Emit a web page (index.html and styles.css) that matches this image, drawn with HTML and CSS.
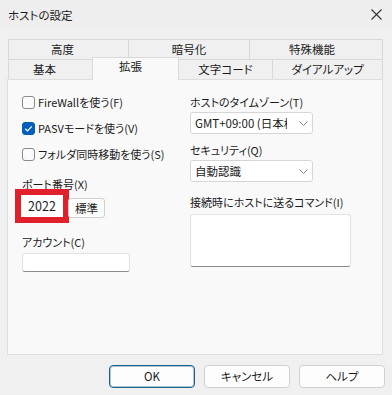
FILE: index.html
```html
<!DOCTYPE html>
<html lang="ja">
<head>
  <meta charset="UTF-8">
  <title>ホストの設定</title>
  <link rel="stylesheet" href="styles.css">
</head>
<body>
  <div class="dialog">
    <div class="titlebar">
      <span class="title">ホストの設定</span>
      <svg class="close" width="11" height="11" viewBox="0 0 11 11">
        <path d="M0.5 0.5 L10.5 10.5 M10.5 0.5 L0.5 10.5" stroke="#333" stroke-width="1.1" fill="none"/>
      </svg>
    </div>

    <div class="tabs">
      <div class="tab-row row-top">
        <div class="tab t-kodo">高度</div>
        <div class="tab t-angou">暗号化</div>
        <div class="tab t-tokushu">特殊機能</div>
      </div>
      <div class="tab-row row-bottom">
        <div class="tab t-kihon">基本</div>
        <div class="tab t-kakucho active">拡張</div>
        <div class="tab t-moji">文字コード</div>
        <div class="tab t-dial">ダイアルアップ</div>
      </div>
    </div>

    <div class="panel">
      <div class="col-left">
        <div class="check-row">
          <span class="checkbox"></span>
          <span>FireWallを使う(F)</span>
        </div>
        <div class="check-row">
          <span class="checkbox checked">
            <svg width="13" height="13" viewBox="0 0 13 13">
              <path d="M3.2 6.8 L5.5 9 L9.8 4.3" stroke="#fff" stroke-width="1.2" fill="none"/>
            </svg>
          </span>
          <span>PASVモードを使う(V)</span>
        </div>
        <div class="check-row">
          <span class="checkbox"></span>
          <span>フォルダ同時移動を使う(S)</span>
        </div>

        <div class="label port-label">ポート番号(X)</div>
        <div class="port-row">
          <div class="port-input">2022</div>
          <div class="small-btn">標準</div>
        </div>

        <div class="label account-label">アカウント(C)</div>
        <div class="text-input account-input"></div>
      </div>

      <div class="col-right">
        <div class="label tz-label">ホストのタイムゾーン(T)</div>
        <div class="select">
          <span class="select-text">GMT+09:00 (日本標準時)</span>
          <svg class="chevron" width="9" height="5" viewBox="0 0 9 5">
            <path d="M0.5 0.5 L4.5 4.5 L8.5 0.5" stroke="#888" stroke-width="1" fill="none"/>
          </svg>
        </div>

        <div class="label sec-label">セキュリティ(Q)</div>
        <div class="select">
          <span class="select-text">自動認識</span>
          <svg class="chevron" width="9" height="5" viewBox="0 0 9 5">
            <path d="M0.5 0.5 L4.5 4.5 L8.5 0.5" stroke="#888" stroke-width="1" fill="none"/>
          </svg>
        </div>

        <div class="label cmd-label">接続時にホストに送るコマンド(I)</div>
        <div class="text-input textarea"></div>
      </div>
    </div>

    <div class="buttons">
      <div class="btn btn-ok">OK</div>
      <div class="btn">キャンセル</div>
      <div class="btn">ヘルプ</div>
    </div>
  </div>
</body>
</html>
```

FILE: styles.css
```css
* {
  box-sizing: border-box;
}

body {
  margin: 0;
  background-color: #f0f0f0;
  font-family: 'Noto Sans CJK JP', sans-serif;
  font-size: 11px;
  color: #1b1b1b;
  font-feature-settings: "palt";
}

.dialog {
  width: 392px;
  height: 395px;
  overflow: hidden;
}

/* title bar */
.titlebar {
  height: 29px;
  display: flex;
  align-items: center;
  justify-content: space-between;
  padding: 0 10px 0 8px;
  background-color: #eeeeee;
}

.title {
  font-size: 11.5px;
}

/* tabs */
.tabs {
  margin: 10px 0 0 8px;
}

.tab-row {
  display: flex;
  align-items: flex-start;
}

.tab {
  border: 1px solid #d9d9d9;
  background-color: #f0f0f0;
  text-align: center;
  line-height: 19px;
  height: 21px;
  margin-left: -1px;
  font-size: 11.5px;
}

.tab:first-child {
  margin-left: 0;
}

.row-bottom {
  margin-top: -1px;
}

.row-bottom .tab {
  height: 20px;
  border-bottom: none;
}

.t-kodo { width: 121px; padding-right: 12px; }
.t-angou { width: 122px; }
.t-tokushu { width: 134px; padding-right: 8px; }

.t-kihon { width: 85px; padding-right: 12px; }
.t-kakucho { width: 87px; padding-right: 10px; }
.t-moji { width: 95px; }
.t-dial { width: 111px; }

.tab.active {
  position: relative;
  z-index: 1;
  height: 23px;
  margin-top: -2px;
  margin-bottom: -1px;
  background-color: #f9f9f9;
  line-height: 17px;
}

/* panel */
.panel {
  margin-left: 7px;
  width: 376px;
  height: 276px;
  border: 1px solid #dedede;
  background-color: #f9f9f9;
  display: grid;
  grid-template-columns: 168px 1fr;
  padding-left: 14px;
}

.label {
  line-height: 16px;
  height: 16px;
}

.col-left {
  padding-top: 9px;
}

.check-row {
  display: flex;
  align-items: center;
  height: 26px;
  gap: 3px;
}

.checkbox {
  width: 13px;
  height: 13px;
  border: 1px solid #8a8a8a;
  border-radius: 3px;
  background-color: #fbfbfb;
  display: flex;
}

.checkbox.checked {
  border-color: #005fb8;
  background-color: #005fb8;
}

.checkbox svg {
  margin: -1px;
}

.port-label {
  margin-top: 9px;
}

.port-row {
  display: flex;
  align-items: flex-start;
  gap: 5px;
  margin-top: 3px;
  margin-left: -1px;
}

.port-input {
  width: 42px;
  height: 22px;
  background-color: #ffffff;
  text-align: center;
  line-height: 22px;
  font-size: 12.5px;
  outline: 6px solid #e0202b;
}

.small-btn {
  margin-top: 3px;
  width: 37px;
  height: 20px;
  border: 1px solid #d0d0d0;
  border-radius: 3px;
  background-color: #fdfdfd;
  text-align: center;
  line-height: 18px;
  font-size: 11.5px;
}

.account-label {
  margin-top: 16px;
}

.text-input {
  background-color: #ffffff;
  border: 1px solid #e3e3e3;
  border-bottom-color: #8a8a8a;
  border-radius: 3px;
}

.account-input {
  margin-top: 3px;
  width: 108px;
  height: 19px;
}

.col-right {
  padding-top: 14px;
}

.select {
  margin-top: 2px;
  width: 123px;
  height: 22px;
  background-color: #ffffff;
  border: 1px solid #d6d6d6;
  border-radius: 3px;
  display: flex;
  align-items: center;
  padding: 0 4px 0 4px;
}

.select-text {
  width: 92px;
  white-space: nowrap;
  overflow: hidden;
  font-size: 11.5px;
}

.chevron {
  margin-left: auto;
}

.sec-label {
  margin-top: 8px;
}

.cmd-label {
  margin-top: 12px;
}

.textarea {
  margin-top: 4px;
  width: 161px;
  height: 53px;
}

/* bottom buttons */
.buttons {
  display: flex;
  justify-content: flex-end;
  gap: 9px;
  margin-top: 10px;
  padding-right: 7px;
}

.btn {
  width: 86px;
  height: 23px;
  border: 1px solid #d0d0d0;
  border-radius: 4px;
  background-color: #fdfdfd;
  text-align: center;
  line-height: 21px;
  font-size: 11.5px;
}

.btn-ok {
  border-color: #1d5f8f;
  box-shadow: inset 0 0 0 1px rgba(29, 95, 143, 0.35);
}
```
